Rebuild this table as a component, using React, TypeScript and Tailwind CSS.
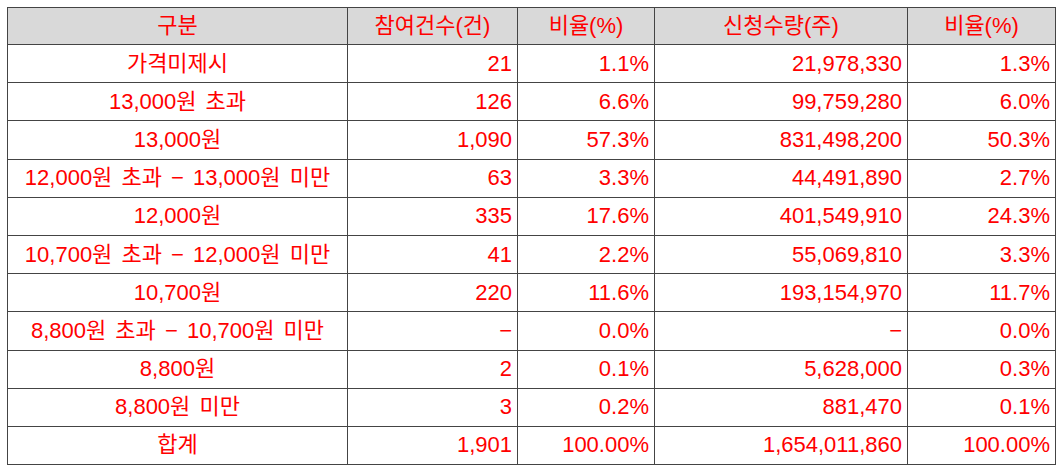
const rows: [string, string, string, string, string][] = [
  ["가격미제시", "21", "1.1%", "21,978,330", "1.3%"],
  ["13,000원 초과", "126", "6.6%", "99,759,280", "6.0%"],
  ["13,000원", "1,090", "57.3%", "831,498,200", "50.3%"],
  ["12,000원 초과 − 13,000원 미만", "63", "3.3%", "44,491,890", "2.7%"],
  ["12,000원", "335", "17.6%", "401,549,910", "24.3%"],
  ["10,700원 초과 − 12,000원 미만", "41", "2.2%", "55,069,810", "3.3%"],
  ["10,700원", "220", "11.6%", "193,154,970", "11.7%"],
  ["8,800원 초과 − 10,700원 미만", "−", "0.0%", "−", "0.0%"],
  ["8,800원", "2", "0.1%", "5,628,000", "0.3%"],
  ["8,800원 미만", "3", "0.2%", "881,470", "0.1%"],
  ["합계", "1,901", "100.00%", "1,654,011,860", "100.00%"],
];

const headers = ["구분", "참여건수(건)", "비율(%)", "신청수량(주)", "비율(%)"];

export default function App() {
  return (
    <div className="h-[470px] w-[1062px] bg-white pl-[7px] pt-[7px]">
      <table
        className="w-[1048px] table-fixed border-collapse text-[22px] leading-none text-[#ff0000] [word-spacing:3px]"
        style={{ fontFamily: '"Liberation Sans", "Noto Sans CJK KR", sans-serif' }}
      >
        <colgroup>
          <col className="w-[340px]" />
          <col className="w-[170px]" />
          <col className="w-[137px]" />
          <col className="w-[253px]" />
          <col className="w-[148px]" />
        </colgroup>
        <thead>
          <tr className="h-[37px] bg-[#d9d9d9]">
            {headers.map((h, i) => (
              <th key={i} className="border border-[#444444] text-center font-normal">
                {h}
              </th>
            ))}
          </tr>
        </thead>
        <tbody>
          {rows.map((r, i) => (
            <tr key={i} className="h-[38.2px]">
              <td className="border border-[#444444] text-center">{r[0]}</td>
              {r.slice(1).map((v, j) => (
                <td key={j} className="border border-[#444444] pr-[5px] text-right">
                  {v}
                </td>
              ))}
            </tr>
          ))}
        </tbody>
      </table>
    </div>
  );
}
